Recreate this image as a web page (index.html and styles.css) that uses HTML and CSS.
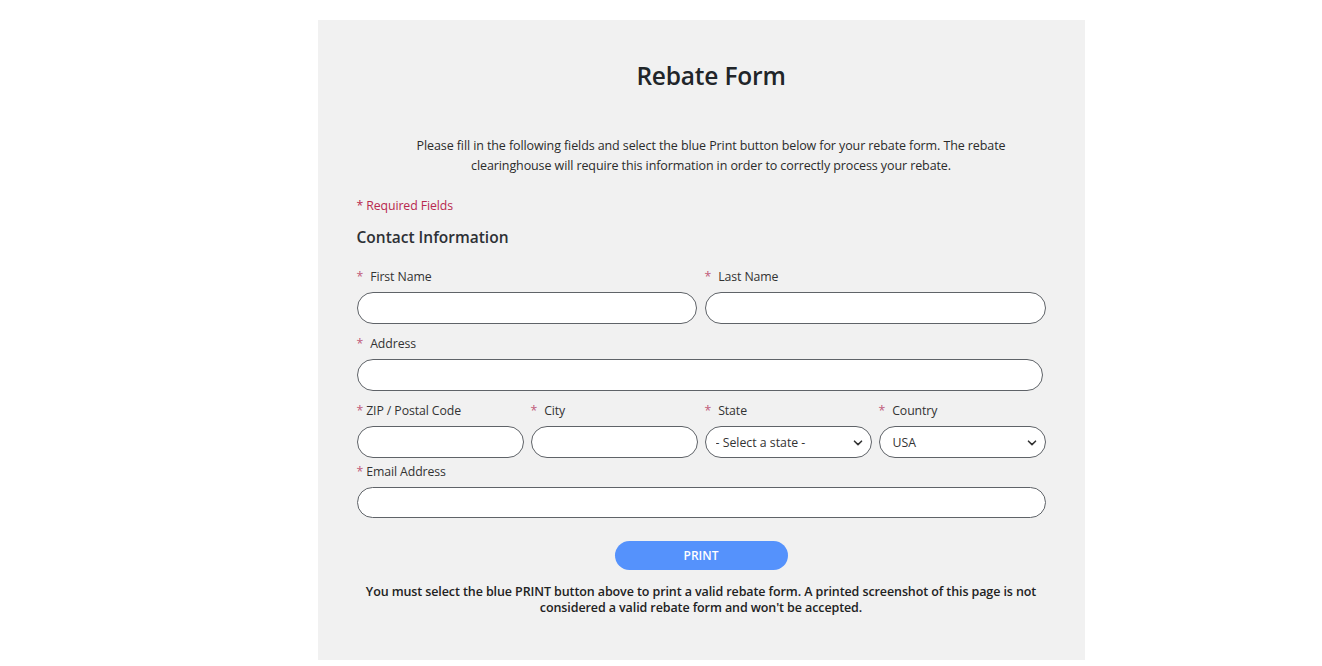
FILE: index.html
```html
<!DOCTYPE html>
<html lang="en">
<head>
<meta charset="utf-8">
<title>Rebate Form</title>
<link rel="stylesheet" href="styles.css">
</head>
<body>
<div class="page">
  <main class="card">
    <h1 class="title">Rebate Form</h1>
    <p class="intro">Please fill in the following fields and select the blue Print button below for your rebate form. The rebate<br>clearinghouse will require this information in order to correctly process your rebate.</p>
    <p class="required-note">* Required Fields</p>
    <h2 class="section-title">Contact Information</h2>
    <form class="form">
      <div class="row row-2">
        <div class="field">
          <label class="label"><span class="star">*</span><span class="label-text spaced">First Name</span></label>
          <input class="input" type="text">
        </div>
        <div class="field">
          <label class="label"><span class="star">*</span><span class="label-text spaced">Last Name</span></label>
          <input class="input" type="text">
        </div>
      </div>
      <div class="row row-1 row-address">
        <div class="field">
          <label class="label"><span class="star">*</span><span class="label-text spaced">Address</span></label>
          <input class="input" type="text">
        </div>
      </div>
      <div class="row row-4">
        <div class="field">
          <label class="label"><span class="star">*</span><span class="label-text">ZIP / Postal Code</span></label>
          <input class="input" type="text">
        </div>
        <div class="field">
          <label class="label"><span class="star">*</span><span class="label-text spaced">City</span></label>
          <input class="input" type="text">
        </div>
        <div class="field">
          <label class="label"><span class="star">*</span><span class="label-text spaced">State</span></label>
          <div class="select-wrap">
            <select class="input select select-state"><option>- Select a state -</option></select>
            <svg class="chevron" width="10" height="6" viewBox="0 0 10 6"><path d="M1.5 1.2 L5 4.6 L8.5 1.2" fill="none" stroke="#333" stroke-width="1.6" stroke-linecap="round" stroke-linejoin="round"/></svg>
          </div>
        </div>
        <div class="field">
          <label class="label"><span class="star">*</span><span class="label-text spaced">Country</span></label>
          <div class="select-wrap">
            <select class="input select"><option>USA</option></select>
            <svg class="chevron" width="10" height="6" viewBox="0 0 10 6"><path d="M1.5 1.2 L5 4.6 L8.5 1.2" fill="none" stroke="#333" stroke-width="1.6" stroke-linecap="round" stroke-linejoin="round"/></svg>
          </div>
        </div>
      </div>
      <div class="row row-1 row-email">
        <div class="field">
          <label class="label"><span class="star">*</span><span class="label-text">Email Address</span></label>
          <input class="input input-email" type="email">
        </div>
      </div>
      <div class="actions">
        <button class="print-btn" type="button">PRINT</button>
      </div>
      <p class="warning">You must select the blue PRINT button above to print a valid rebate form. A printed screenshot of this page is not<br>considered a valid rebate form and won't be accepted.</p>
    </form>
  </main>
</div>
</body>
</html>
```

FILE: styles.css
```css
* { box-sizing: border-box; }
html, body { margin: 0; padding: 0; background: #ffffff; }
body {
  font-family: "Open Sans", "Noto Sans", "Liberation Sans", sans-serif;
  color: #333333;
}
.page {
  padding: 20px 0 0 80px;
  display: flex;
  justify-content: center;
}
.card {
  width: 767px;
  height: 640px;
  background: #f1f1f1;
  padding: 40px 39px 0 39px;
}
.title {
  margin: 0;
  padding-left: 20px;
  text-align: center;
  font-size: 24.5px;
  line-height: 32px;
  font-weight: 600;
  color: #212529;
  letter-spacing: -0.2px;
}
.intro {
  margin: 44px 0 0 0;
  padding-left: 20px;
  text-align: center;
  font-size: 12.5px;
  line-height: 20px;
  color: #2b2b2b;
  letter-spacing: -0.1px;
}
.required-note {
  margin: 21px 0 0 0;
  font-size: 12.3px;
  line-height: 18px;
  color: #b8294f;
  letter-spacing: -0.1px;
}
.section-title {
  margin: 11px 0 0 0;
  font-size: 15.5px;
  line-height: 22px;
  font-weight: 600;
  color: #2d3035;
}
.form { margin: 20px 0 0 0; }
.row { display: grid; }
.row-2 { grid-template-columns: 340px 341px; column-gap: 8px; }
.row-1 { grid-template-columns: 1fr; }
.row-address { margin-top: 11px; padding-right: 3px; }
.row-4 { grid-template-columns: repeat(4, 167px); column-gap: 7px; margin-top: 11px; }
.row-email { margin-top: 5px; }
.field { display: flex; flex-direction: column; }
.label {
  display: flex;
  font-size: 12.3px;
  line-height: 18px;
  color: #333333;
  letter-spacing: -0.1px;
  margin-bottom: 6px;
}
.star { color: #c05a7a; }
.label-text { margin-left: 3px; }
.label-text.spaced { margin-left: 7px; }
.input {
  display: block;
  width: 100%;
  height: 32px;
  margin: 0;
  border: 1px solid #5f6368;
  border-radius: 16px;
  background: #ffffff;
  font-family: inherit;
  font-size: 12.3px;
  color: #333333;
  padding: 0 12px;
  outline: none;
}
.input-email { height: 31px; }
.select-wrap { position: relative; }
.select {
  -webkit-appearance: none;
  appearance: none;
  padding-left: 13px;
}
.select-state { padding-left: 10px; }
.chevron {
  position: absolute;
  right: 9px;
  top: 14px;
  pointer-events: none;
}
.actions {
  display: flex;
  justify-content: center;
  margin-top: 23px;
}
.print-btn {
  width: 173px;
  height: 29px;
  border: none;
  border-radius: 15px;
  background: #5592fc;
  color: #ffffff;
  font-family: inherit;
  font-size: 12px;
  font-weight: 600;
  padding: 0;
}
.warning {
  margin: 14px 0 0 0;
  text-align: center;
  font-size: 12.5px;
  line-height: 16px;
  font-weight: 600;
  color: #222222;
  letter-spacing: -0.1px;
}
```
